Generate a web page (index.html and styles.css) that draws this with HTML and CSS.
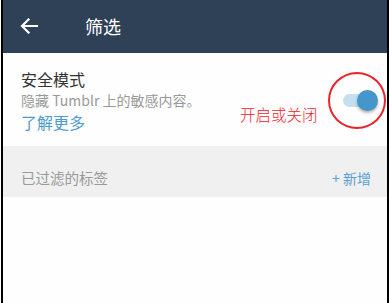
FILE: index.html
```html
<!DOCTYPE html>
<html lang="zh-CN">
<head>
<meta charset="utf-8">
<title>筛选</title>
<link rel="stylesheet" href="styles.css">
</head>
<body>
<div class="page">
  <header class="appbar">
    <svg class="back" width="18" height="16" viewBox="0 0 18 16" aria-hidden="true">
      <path d="M17 8H2.5M8.5 1.5L2 8l6.5 6.5" fill="none" stroke="#ffffff" stroke-width="2.2" stroke-linecap="square"/>
    </svg>
    <h1 class="title">筛选</h1>
  </header>

  <section class="safe-row">
    <div class="safe-text">
      <div class="safe-title">安全模式</div>
      <div class="safe-sub">隐藏 Tumblr 上的敏感内容。</div>
      <a class="safe-link">了解更多</a>
    </div>
    <div class="toggle">
      <span class="track"></span>
      <span class="knob"></span>
    </div>
    <span class="note-circle"></span>
    <span class="note-text">开启或关闭</span>
  </section>

  <section class="tags-head">
    <span class="tags-label">已过滤的标签</span>
    <span class="tags-add">+ 新增</span>
  </section>

  <div class="rest"></div>
</div>
</body>
</html>
```

FILE: styles.css
```css
html, body {
  margin: 0;
  padding: 0;
  background: #ffffff;
  height: 100%;
}
body {
  font-family: "Noto Sans CJK SC", "Noto Sans", Roboto, sans-serif;
}
.page {
  margin-left: 1px;
  width: 384px;
  min-height: 303px;
  border-left: 2px solid #000;
  border-right: 2px solid #000;
  background: #fdfefd;
  display: flex;
  flex-direction: column;
}
.appbar {
  height: 53px;
  background: #2f4157;
  display: flex;
  align-items: center;
  padding-left: 17px;
  box-sizing: border-box;
}
.back {
  display: block;
  margin-top: -1px;
}
.title {
  margin: 0 0 0 47px;
  font-size: 18px;
  font-weight: normal;
  color: #ffffff;
  line-height: 24px;
  margin-top: -2px;
}
.safe-row {
  position: relative;
  display: flex;
  align-items: center;
  justify-content: space-between;
  padding: 15px 9px 13px 18px;
  background: #fdfefd;
}
.safe-text {
  display: flex;
  flex-direction: column;
}
.safe-title {
  font-size: 16px;
  line-height: 22px;
  color: #333333;
}
.safe-sub {
  font-size: 14px;
  line-height: 20px;
  color: #9a9a9a;
}
.safe-link {
  font-size: 16px;
  line-height: 22px;
  color: #4d9ad0;
  margin-top: 1px;
}
.toggle {
  position: relative;
  width: 35px;
  height: 22px;
}
.track {
  position: absolute;
  left: 0;
  top: 4px;
  width: 30px;
  height: 13px;
  border-radius: 7px;
  background: #c4dff0;
}
.knob {
  position: absolute;
  right: 0;
  top: 0;
  width: 21px;
  height: 21px;
  border-radius: 50%;
  background: #4596cb;
  box-shadow: 0 2px 3px rgba(0, 0, 0, 0.3);
}
.note-circle {
  position: absolute;
  left: 325px;
  top: 19px;
  width: 54px;
  height: 53px;
  border: 2px solid #ec2329;
  border-radius: 50%;
}
.note-text {
  position: absolute;
  left: 237px;
  top: 51px;
  font-size: 15.5px;
  line-height: 20px;
  font-weight: 300;
  color: #f2222a;
}
.tags-head {
  display: flex;
  justify-content: space-between;
  align-items: center;
  height: 51px;
  box-sizing: border-box;
  padding: 12px 16px 0 18px;
  background: #eff0ef;
}
.tags-label {
  font-size: 14.5px;
  line-height: 20px;
  color: #9a9a9a;
}
.tags-add {
  font-size: 14px;
  line-height: 20px;
  color: #5aa0d3;
}
.rest {
  flex: 1;
  background: #fdfefd;
}
```
